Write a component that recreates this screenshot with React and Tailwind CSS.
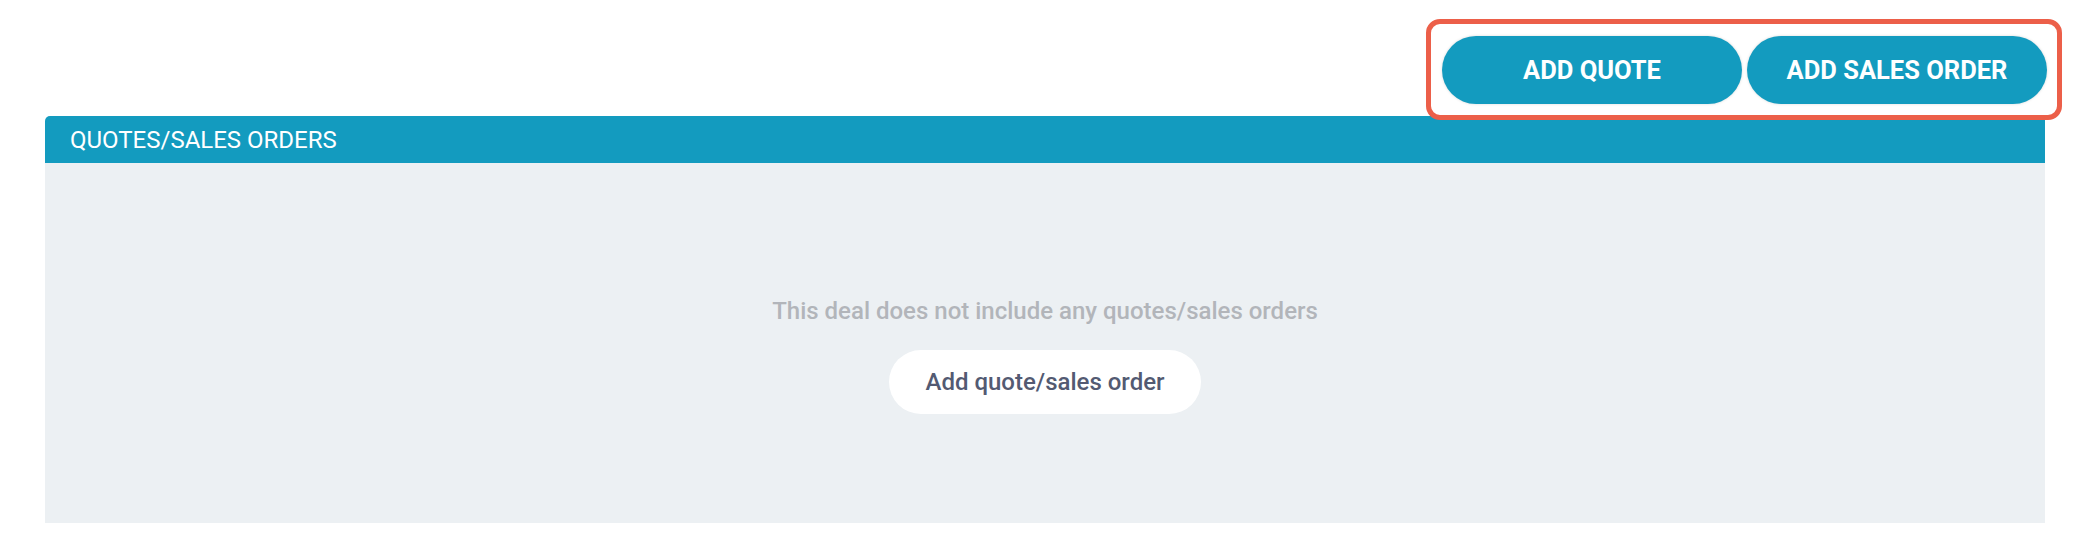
export default function App() {
  return (
    <div className="w-[2090px] h-[552px] bg-white" style={{ fontFamily: 'Roboto, "Noto Sans", sans-serif' }}>
      <div className="flex justify-end pr-[43px] pt-[36px] pb-[12px]">
        <div className="relative flex gap-[5px]">
          <div className="absolute -left-[16px] -right-[15px] -top-[17px] -bottom-[16px] border-[5px] border-[#ec5f49] rounded-[14px] pointer-events-none" />
          <button className="w-[300px] h-[68px] rounded-full bg-[#139bbf] text-white font-bold text-[25.5px] shadow-[0_0_3px_rgba(0,0,0,0.15)]">
            ADD QUOTE
          </button>
          <button className="w-[300px] h-[68px] rounded-full bg-[#139bbf] text-white font-bold text-[25.5px] shadow-[0_0_3px_rgba(0,0,0,0.15)]">
            ADD SALES ORDER
          </button>
        </div>
      </div>
      <div className="mx-[45px] w-[2000px]">
        <div className="h-[47px] bg-[#139bbf] rounded-tl-[5px] flex items-center pl-[25px] text-white text-[24px] leading-none">
          QUOTES/SALES ORDERS
        </div>
        <div className="h-[360px] bg-[#ecf0f3] flex flex-col items-center pt-[134px]">
          <div className="text-[24px] leading-[28px] font-medium text-[#b2b5ba]">
            This deal does not include any quotes/sales orders
          </div>
          <button className="mt-[25px] w-[312px] h-[64px] rounded-full bg-white text-[#535a72] font-medium text-[24px]">
            Add quote/sales order
          </button>
        </div>
      </div>
    </div>
  );
}
